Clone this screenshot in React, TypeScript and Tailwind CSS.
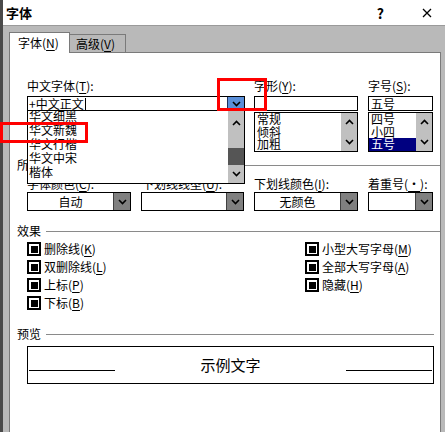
import React from 'react';

const Chev = ({ up = false }: { up?: boolean }) => (
  <svg width="9" height="6" viewBox="0 0 9 6">
    <path d={up ? 'M1 5 L4.5 1.5 L8 5' : 'M1 1 L4.5 4.5 L8 1'} fill="none" stroke="#000" strokeWidth="1.6" />
  </svg>
);

const U = ({ children }: { children: React.ReactNode }) => (
  <span className="underline underline-offset-2">{children}</span>
);

const Combo = ({ w, text }: { w: string; text?: string }) => (
  <div className={`${w} h-[19px] border border-black flex bg-white`}>
    <div className="flex-1 flex items-center justify-center text-[12px] leading-[17px]">{text}</div>
    <div className="w-[17px] bg-[#808080] border-l border-[#404040] flex items-center justify-center">
      <Chev />
    </div>
  </div>
);

const Check = ({ children }: { children: React.ReactNode }) => (
  <div className="h-[18px] flex items-center">
    <div className="w-[14px] h-[14px] border-2 border-black bg-white flex items-center justify-center">
      <div className="w-[7px] h-[7px] bg-black" />
    </div>
    <div className="ml-[3px] text-[12px] leading-[14px]">{children}</div>
  </div>
);

const SmallScroll = () => (
  <div className="w-[16px] bg-[#c0c0c0] flex flex-col items-center justify-between py-[6px]">
    <Chev up />
    <Chev />
  </div>
);

export default function App() {
  return (
    <div className="relative w-[445px] h-[432px] flex overflow-hidden text-black font-['SimSun','Noto_Sans_CJK_SC','Noto_Sans',sans-serif]">
      <div className="w-[3px] bg-[#4a4a4a]" />
      <div className="flex-1 flex flex-col">
        {/* title bar */}
        <div className="h-[26px] bg-white flex items-center border-b border-[#9a9a9a]">
          <div className="ml-[3px] text-[13px] font-bold leading-[14px]">字体</div>
          <div className="ml-auto text-[14px] font-bold leading-[14px]">?</div>
          <svg width="10" height="10" viewBox="0 0 10 10" className="ml-[38px] mr-[13px]">
            <path d="M1 1 L9 9 M9 1 L1 9" stroke="#000" strokeWidth="1.3" />
          </svg>
        </div>
        {/* grey area */}
        <div className="flex-1 bg-[#b9b9b9] flex flex-col pl-[6px] pr-[4px] pt-[6px]">
          <div className="h-[20px] flex items-end">
            <div className="relative z-10 -mb-px h-[21px] w-[61px] bg-white border border-b-0 border-[#7a7a7a] flex items-center pl-[8px] text-[12px] leading-[14px]">
              字体(<U>N</U>)
            </div>
            <div className="h-[18px] w-[56px] border border-b-0 border-l-0 border-[#7a7a7a] flex items-center pl-[6px] text-[12px] leading-[14px]">
              高级(<U>V</U>)
            </div>
          </div>
          <div className="flex-1 bg-white border border-b-0 border-[#7a7a7a] flex flex-col text-[12px] leading-[14px]">
            {/* labels */}
            <div className="mt-[26px] h-[14px] flex pl-[17px]">
              <div className="w-[227px]">中文字体(<U>T</U>):</div>
              <div className="w-[114px]">字形(<U>Y</U>):</div>
              <div>字号(<U>S</U>):</div>
            </div>
            {/* inputs */}
            <div className="mt-[3px] flex pl-[17px]">
              <div className="w-[218px] h-[15px] border border-black flex">
                <div className="flex-1 flex items-center pl-[1px] leading-[13px]">
                  +中文正文<span className="w-px h-[12px] bg-black ml-px" />
                </div>
                <div className="w-[17px] bg-[#5a8fd9] border-l border-[#1c2f5a] flex items-center justify-center">
                  <Chev />
                </div>
              </div>
              <div className="ml-[9px] w-[104px] h-[15px] border border-black" />
              <div className="ml-[10px] w-[65px] h-[15px] border border-black flex items-center pl-[2px] leading-[13px]">五号</div>
            </div>
            {/* lists */}
            <div className="mt-px flex pl-[17px]">
              <div className="w-[227px]" />
              <div className="w-[104px] h-[40px] border border-black flex">
                <div className="flex-1 pl-[2px] leading-[12.5px] overflow-hidden">
                  <div>常规</div>
                  <div>倾斜</div>
                  <div>加粗</div>
                </div>
                <SmallScroll />
              </div>
              <div className="ml-[10px] w-[65px] h-[40px] border border-black flex">
                <div className="flex-1 leading-[12.5px] overflow-hidden">
                  <div className="pl-[2px]">四号</div>
                  <div className="pl-[2px]">小四</div>
                  <div className="pl-[2px] bg-[#000080] text-white">五号</div>
                </div>
                <SmallScroll />
              </div>
            </div>
            {/* all text separator */}
            <div className="mt-[6px] h-[14px] flex items-center pl-[7px]">
              <div>所有文字</div>
              <div className="ml-[4px] flex-1 h-px bg-[#8a8a8a]" />
            </div>
            {/* labels row 2 */}
            <div className="mt-[5px] h-[14px] flex pl-[17px]">
              <div className="w-[115px]">字体颜色(<U>C</U>):</div>
              <div className="w-[112px]">下划线线型(<U>U</U>):</div>
              <div className="w-[114px]">下划线颜色(<U>I</U>):</div>
              <div>着重号(<U>·</U>):</div>
            </div>
            {/* combos */}
            <div className="mt-px flex pl-[17px]">
              <Combo w="w-[104px]" text="自动" />
              <div className="w-[10px]" />
              <Combo w="w-[103px]" />
              <div className="w-[10px]" />
              <Combo w="w-[104px]" text="无颜色" />
              <div className="w-[10px]" />
              <Combo w="w-[65px]" />
            </div>
            {/* effects */}
            <div className="mt-[13px] h-[14px] flex items-center pl-[7px]">
              <div>效果</div>
              <div className="ml-[5px] flex-1 h-px bg-[#8a8a8a]" />
            </div>
            <div className="mt-[2px] flex pl-[17px]">
              <div className="w-[278px] flex flex-col">
                <Check>删除线(<U>K</U>)</Check>
                <Check>双删除线(<U>L</U>)</Check>
                <Check>上标(<U>P</U>)</Check>
                <Check>下标(<U>B</U>)</Check>
              </div>
              <div className="flex flex-col">
                <Check>小型大写字母(<U>M</U>)</Check>
                <Check>全部大写字母(<U>A</U>)</Check>
                <Check>隐藏(<U>H</U>)</Check>
              </div>
            </div>
            {/* preview */}
            <div className="mt-[15px] h-[14px] flex items-center pl-[7px] pr-[6px]">
              <div>预览</div>
              <div className="ml-[5px] flex-1 h-px bg-[#8a8a8a]" />
            </div>
            <div className="mt-[5px] ml-[17px] w-[407px] h-[38px] border border-black flex items-center px-[1px]">
              <div className="w-[86px] h-px bg-black mt-[10px]" />
              <div className="flex-1 text-center text-[15px] leading-[18px]">示例文字</div>
              <div className="w-[86px] h-px bg-black mt-[10px]" />
            </div>
          </div>
        </div>
      </div>

      {/* open font dropdown list */}
      <div className="absolute left-[27px] top-[110px] w-[218px] h-[74px] bg-white border border-black flex text-[12px] leading-[14px] z-20">
        <div className="flex-1 overflow-hidden pl-[1px]">
          <div className="-mt-[2px]">华文细黑</div>
          <div>华文新魏</div>
          <div>华文行楷</div>
          <div>华文中宋</div>
          <div>楷体</div>
        </div>
        <div className="w-[16px] bg-[#c0c0c0] flex flex-col items-center pt-[9px] pb-[6px]">
          <Chev up />
          <div className="mt-[22px] w-[16px] h-[17px] bg-[#555555]" />
          <div className="mt-auto">
            <Chev />
          </div>
        </div>
      </div>

      {/* red annotation boxes */}
      <div className="absolute left-[217px] top-[78px] w-[50px] h-[33px] border-[3px] border-[#ff0000] z-30" />
      <div className="absolute left-0 top-[122px] w-[88px] h-[21px] border-[3px] border-[#ff0000] z-30" />
    </div>
  );
}
